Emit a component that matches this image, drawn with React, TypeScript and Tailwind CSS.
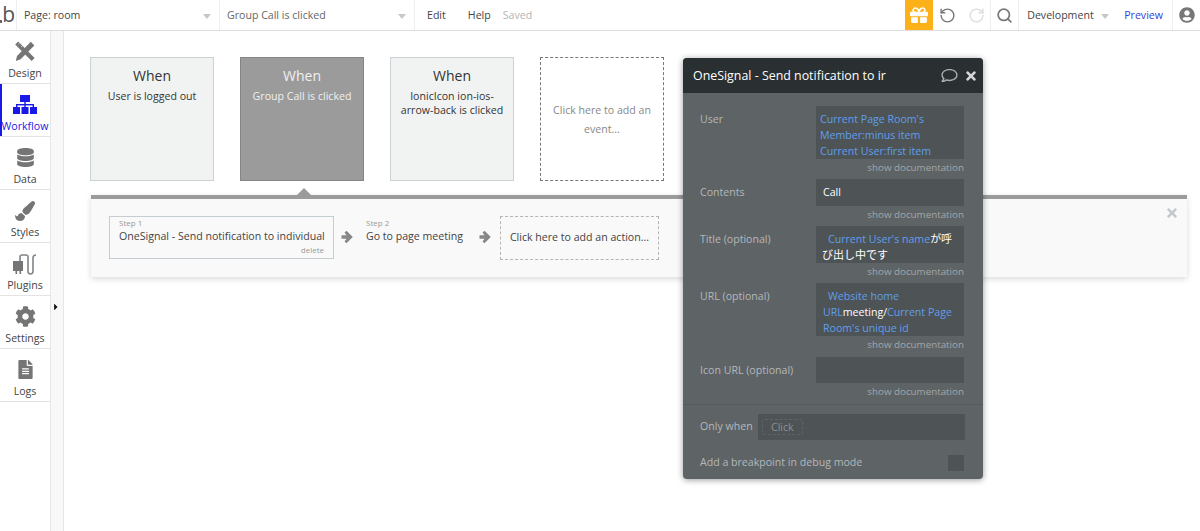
import React from "react";
import { FaDatabase, FaPaintBrush, FaCog, FaFileAlt, FaGift, FaUserCircle, FaTimes, FaRegComment, FaCaretRight } from "react-icons/fa";
import { RotateCcw, RotateCw, Search } from "lucide-react";

const font = "font-['Open_Sans','Noto_Sans_CJK_JP',sans-serif]";

function PlugIcon() {
  return (
    <svg viewBox="0 0 24 22" className="h-[22px] w-[24px]" fill="#757575">
      <rect x="0" y="8" width="10" height="10" />
      <rect x="2.5" y="18" width="1.6" height="3" />
      <rect x="6.5" y="18" width="1.6" height="3" />
      <path d="M7 8V4Q7 2 9 2H13Q15 2 15 4V18Q15 21 17.5 21Q20 21 20 18V5Q20 2 23 2" fill="none" stroke="#7f858a" strokeWidth="1.6" />
    </svg>
  );
}

function DesignIcon() {
  return (
    <svg viewBox="0 0 20 21" className="h-[21px] w-[20px]" fill="#757575">
      <path d="M3.2 .6 L19.6 17 L16.6 20 L.2 3.6 Z" />
      <path d="M4.6 2 3.4 3.2M7.4 4.8 6.2 6M10.2 7.6 9 8.8" stroke="#f2f2f2" strokeWidth=".8" />
      <path d="M15.8 .8 L19.4 4.4 L5.6 18.2 L.8 20 L2 15 Z" />
    </svg>
  );
}

function WorkflowIcon() {
  return (
    <svg viewBox="0 0 24 19" className="h-[19px] w-[24px]" fill="#1a1ae6">
      <rect x="7" y="0" width="10" height="7" />
      <rect x="11.3" y="7" width="1.4" height="5" />
      <rect x="3" y="9" width="18" height="1.4" />
      <rect x="3" y="9" width="1.4" height="4" />
      <rect x="19.6" y="9" width="1.4" height="4" />
      <rect x="0" y="12" width="7" height="7" />
      <rect x="8.5" y="12" width="7" height="7" />
      <rect x="17" y="12" width="7" height="7" />
    </svg>
  );
}

function StepArrow({ className }: { className: string }) {
  return (
    <svg viewBox="0 0 12 14" className={`h-[14px] w-[12px] shrink-0 ${className}`} fill="#888888">
      <path d="M.5 5.2H5.5L3.5 2.5 5.5 .8 11.8 7 5.5 13.2 3.5 11.5 5.5 8.8H.5Z" />
    </svg>
  );
}

function NavItem({ icon, label, active }: { icon: React.ReactNode; label: string; active?: boolean }) {
  return (
    <div className={`relative flex h-[53px] flex-col items-center border-b border-[#e3e3e3] pt-[9px] ${active ? "text-[#2222dd]" : "text-[#444444]"}`}>
      {active && <div className="absolute bottom-0 left-0 top-0 w-[2px] bg-[#1a1ae6]" />}
      <div className="flex h-[23px] items-center justify-center">{icon}</div>
      <div className="mt-[3px] whitespace-nowrap text-[10.6px] leading-[15px]">{label}</div>
    </div>
  );
}

function EventCard({ title, lines, selected }: { title: string; lines: string[]; selected?: boolean }) {
  return (
    <div className={`h-[124px] w-[124px] border pt-[8px] text-center ${selected ? "border-[#858585] bg-[#9b9b9b] text-[#f0f0f0]" : "border-[#cbd2d6] bg-[#f1f3f3] text-[#333333]"}`}>
      <div className="text-[14px] leading-[20px]">{title}</div>
      <div className="mt-[3px] text-[10.6px] leading-[14px]">
        {lines.map((l) => (
          <div key={l}>{l}</div>
        ))}
      </div>
    </div>
  );
}

function Field({ label, h, mt, children }: { label: string; h: string; mt?: string; children?: React.ReactNode }) {
  return (
    <div className={mt}>
      <div className="flex items-start">
        <div className="w-[133px] shrink-0 whitespace-nowrap pl-[17px] pt-[5px] text-[10.6px] leading-[16px] text-[#b4b8ba]">{label}</div>
        <div className={`w-[148px] shrink-0 whitespace-nowrap bg-[#4e5356] text-[10.6px] leading-[16px] ${h}`}>{children}</div>
      </div>
      <div className="h-[15px] w-[281px] pt-[1.5px] text-right text-[9.8px] leading-[14px] text-[#a3a7a9]">show documentation</div>
    </div>
  );
}

const Blue = ({ children }: { children: React.ReactNode }) => <span className="text-[#5f9fea]">{children}</span>;

export default function App() {
  return (
    <div className={`${font} relative flex h-[531px] w-[1200px] flex-col overflow-hidden bg-white`}>
      <header className="flex h-[31px] shrink-0 items-center border-b border-[#dddddd] text-[10.6px] text-[#444444]">
        <div className="flex h-full w-[17px] items-center justify-between border-r border-[#eeeeee] pr-[1px] text-[21px] text-[#555555]">
          <span className="mt-[12px] h-[3px] w-[2px] bg-[#666666]" />
          <span>b</span>
        </div>
        <div className="flex h-full w-[203px] items-center justify-between border-r border-[#eeeeee] pl-[7px] pr-[8px]">
          <span className="pt-[1px]">Page: room</span>
          <span className="mt-[2px] h-0 w-0 border-x-[4px] border-t-[5px] border-x-transparent border-t-[#c4c8cb]" />
        </div>
        <div className="flex h-full w-[195px] items-center justify-between border-r border-[#eeeeee] pl-[7px] pr-[8px] text-[#666666]">
          <span className="pt-[1px]">Group Call is clicked</span>
          <span className="mt-[2px] h-0 w-0 border-x-[4px] border-t-[5px] border-x-transparent border-t-[#c4c8cb]" />
        </div>
        <span className="ml-[12px] pt-[1px]">Edit</span>
        <span className="ml-[22px] pt-[1px]">Help</span>
        <span className="ml-[12px] pt-[1px] text-[#b5b5b5]">Saved</span>
        <div className="flex-1" />
        <div className="flex h-full w-[28px] items-center justify-center bg-[#fbb117] text-white">
          <FaGift size={18} />
        </div>
        <div className="flex h-full w-[29px] items-center justify-center">
          <RotateCcw size={17} color="#777777" strokeWidth={2} />
        </div>
        <div className="flex h-full w-[29px] items-center justify-center border-r border-[#eeeeee]">
          <RotateCw size={17} color="#dddddd" strokeWidth={2} />
        </div>
        <div className="flex h-full w-[28px] items-center justify-center border-r border-[#eeeeee]">
          <Search size={17} color="#7a7a7a" strokeWidth={2.5} />
        </div>
        <div className="ml-[8px] flex w-[97px] items-center pt-[1px]">
          <span>Development</span>
          <span className="ml-[7px] mt-[2px] h-0 w-0 border-x-[4px] border-t-[5px] border-x-transparent border-t-[#c4c8cb]" />
        </div>
        <span className="pt-[1px] text-[#3a3ae0]">Preview</span>
        <div className="ml-[9px] flex h-full w-[28px] items-center justify-center border-l border-[#eeeeee] text-[#777777]">
          <FaUserCircle size={16} />
        </div>
      </header>

      <div className="flex min-h-0 flex-1">
        <nav className="w-[51px] shrink-0 border-r border-[#e6e6e6]">
          <NavItem label="Design" icon={<DesignIcon />} />
          <NavItem active label="Workflow" icon={<WorkflowIcon />} />
          <NavItem label="Data" icon={<FaDatabase size={19} color="#757575" />} />
          <NavItem label="Styles" icon={<FaPaintBrush size={20} color="#757575" />} />
          <NavItem label="Plugins" icon={<PlugIcon />} />
          <NavItem label="Settings" icon={<FaCog size={21} color="#757575" />} />
          <NavItem label="Logs" icon={<FaFileAlt size={19} color="#757575" />} />
        </nav>
        <div className="relative w-[13px] shrink-0 border-r border-[#e6e6e6] bg-[#f8f8f8]">
          <FaCaretRight size={10} color="#111111" className="absolute left-0 top-[271px]" />
        </div>

        <main className="relative min-w-0 flex-1 pl-[26px] pr-[13px] pt-[26px]">
          <div className="flex gap-[26px]">
            <EventCard title="When" lines={["User is logged out"]} />
            <EventCard selected title="When" lines={["Group Call is clicked"]} />
            <EventCard title="When" lines={["IonicIcon ion-ios-", "arrow-back is clicked"]} />
            <div className="flex h-[124px] w-[124px] items-center justify-center border border-dashed border-[#777777] pt-[2px] text-center text-[10.6px] leading-[19px] text-[#888888]">
              <div>
                Click here to add an
                <br />
                event...
              </div>
            </div>
          </div>

          <div className="relative ml-[1px] mt-[14px] flex h-[82px] items-start whitespace-nowrap border-t-[4px] border-[#9b9b9b] bg-[#f9f9f9] pl-[18px] pt-[17px] shadow-[0_2px_6px_rgba(0,0,0,0.15)]">
            <div className="absolute left-[206px] top-[-11px] h-0 w-0 border-x-[7px] border-b-[7px] border-x-transparent border-b-[#9b9b9b]" />
            <FaTimes size={14} color="#c4c8cb" className="absolute right-[8px] top-[7px]" />
            <div className="relative h-[43px] w-[225px] border border-[#c3cdd2] bg-[#f9f9f9] pl-[9px] text-[#444444]">
              <div className="text-[8px] leading-[12px] text-[#999999]">Step 1</div>
              <div className="text-[10.6px] leading-[15px]">OneSignal - Send notification to individual</div>
              <div className="pr-[9px] text-right text-[8px] leading-[12px] text-[#999999]">delete</div>
            </div>
            <StepArrow className="ml-[7px] mt-[14px]" />
            <div className="ml-[13px] w-[98px] pt-[1px] text-[#444444]">
              <div className="text-[8px] leading-[12px] text-[#999999]">Step 2</div>
              <div className="text-[10.6px] leading-[15px]">Go to page meeting</div>
            </div>
            <StepArrow className="ml-[15px] mt-[14px]" />
            <div className="ml-[9px] flex h-[44px] w-[159px] items-center justify-center border border-dashed border-[#b5b5b5] pb-[1px] text-[10.6px] text-[#444444]">
              Click here to add an action...
            </div>
          </div>

          <aside className="absolute left-[619px] top-[27px] z-10 h-[421px] w-[300px] overflow-hidden rounded-[4px] bg-[#5e6366] shadow-[0_1px_6px_rgba(0,0,0,0.4)]">
            <div className="flex h-[35px] items-center justify-between bg-[#2a2f31] pl-[10px] pr-[5px] text-white">
              <div className="w-[240px] overflow-hidden whitespace-nowrap pt-[1px] text-[12.4px]">OneSignal - Send notification to ir</div>
              <div className="flex items-center gap-[7px]">
                <FaRegComment size={15} color="#a9adaf" className="scale-x-[1.1]" />
                <FaTimes size={14} color="#d3d5d6" />
              </div>
            </div>
            <div className="pt-[13px]">
              <Field label="User" h="h-[53px]">
                <div className="pl-[4px] pt-[5px]">
                  <Blue>Current Page Room's<br />Member:minus item<br />Current User:first item</Blue>
                </div>
              </Field>
              <Field label="Contents" h="h-[27px]" mt="mt-[5px]">
                <div className="pl-[7px] pt-[5px] text-white">Call</div>
              </Field>
              <Field label="Title (optional)" h="h-[37px]" mt="mt-[5px]">
                <div className="pl-[6px] pt-[5px] text-white">
                  <span className="pl-[6px]"><Blue>Current User's name</Blue></span><span className="text-[11px]">が呼</span>
                  <br />
                  <span className="text-[11px]">び出し中です</span>
                </div>
              </Field>
              <Field label="URL (optional)" h="h-[53px]" mt="mt-[5px]">
                <div className="pl-[7px] pt-[5px] text-white">
                  <span className="pl-[5px]"><Blue>Website home</Blue></span>
                  <br />
                  <Blue>URL</Blue>meeting/<Blue>Current Page</Blue>
                  <br />
                  <Blue>Room's unique id</Blue>
                </div>
              </Field>
              <Field label="Icon URL (optional)" h="h-[26px]" mt="mt-[6px]" />
            </div>
            <div className="mt-[6px] border-t border-[#565b5e] pl-[17px] pt-[9px]">
              <div className="flex items-center">
                <span className="w-[58px] shrink-0 whitespace-nowrap text-[10.6px] text-[#b4b8ba]">Only when</span>
                <div className="flex h-[26px] w-[207px] items-center bg-[#4e5356] pl-[4px]">
                  <span className="rounded-[3px] border border-dashed border-[#5e6366] px-[8px] text-[10.6px] leading-[14px] text-[#8d9193]">Click</span>
                </div>
              </div>
              <div className="mt-[15px] flex h-[16px] w-[264px] items-center justify-between text-[10.6px] text-[#b4b8ba]">
                <span>Add a breakpoint in debug mode</span>
                <span className="h-[16px] w-[16px] bg-[#4e5356]" />
              </div>
            </div>
          </aside>
        </main>
      </div>
    </div>
  );
}
